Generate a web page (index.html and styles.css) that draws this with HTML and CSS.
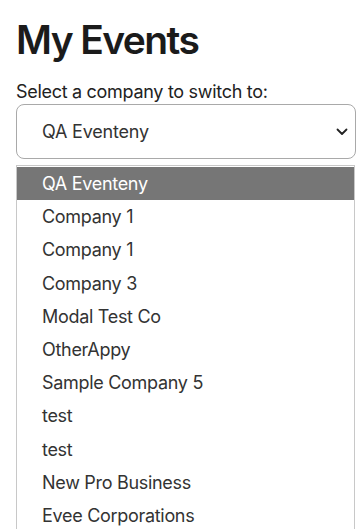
FILE: index.html
```html
<!DOCTYPE html>
<html lang="en">
<head>
  <meta charset="UTF-8">
  <meta name="viewport" content="width=device-width, initial-scale=1.0">
  <title>My Events</title>
  <link rel="stylesheet" href="styles.css">
</head>
<body>

  <!-- Page heading -->
  <h1 class="page-title">My Events</h1>

  <!-- Company switcher -->
  <div class="switcher">
    <label class="switcher-label">Select a company to switch to:</label>
    <div class="select-box">
      <span class="select-value">QA Eventeny</span>
      <svg class="chevron" width="12" height="8" viewBox="0 0 12 8">
        <path d="M1.5 1.5 L6 6 L10.5 1.5" fill="none" stroke="#222" stroke-width="1.8" stroke-linecap="round" stroke-linejoin="round"/>
      </svg>
    </div>

    <!-- Open dropdown list -->
    <ul class="options">
      <li class="option selected">QA Eventeny</li>
      <li class="option">Company 1</li>
      <li class="option">Company 1</li>
      <li class="option">Company 3</li>
      <li class="option">Modal Test Co</li>
      <li class="option">OtherAppy</li>
      <li class="option">Sample Company 5</li>
      <li class="option">test</li>
      <li class="option">test</li>
      <li class="option">New Pro Business</li>
      <li class="option">Evee Corporations</li>
    </ul>
  </div>

</body>
</html>
```

FILE: styles.css
```css
/* Reset */
* {
  margin: 0;
  padding: 0;
  box-sizing: border-box;
}

body {
  font-family: Inter, "Noto Sans", sans-serif;
  background-color: #fff;
  color: #333;
  padding: 0 4px 0 16px;
  overflow: hidden;
}

/* Heading */
.page-title {
  font-size: 39px;
  font-weight: 600;
  letter-spacing: -1.6px;
  color: #1b1b1b;
  line-height: 48px;
  padding-top: 16px;
}

/* Switcher */
.switcher {
  margin-top: 17px;
}

.switcher-label {
  display: block;
  font-size: 18px;
  letter-spacing: -0.3px;
  color: #222;
  line-height: 22px;
}

.select-box {
  display: flex;
  align-items: center;
  justify-content: space-between;
  height: 55px;
  margin-top: 1px;
  border: 1px solid #a9a9a9;
  border-radius: 8px;
  padding: 0 7px 0 25px;
}

.select-value {
  font-size: 18px;
  letter-spacing: -0.2px;
  color: #333;
}

/* Dropdown list */
.options {
  list-style: none;
  margin-top: 6px;
  border: 1px solid #c8c8c8;
  border-bottom: none;
  margin-right: 1px;
  padding-top: 1px;
}

.option {
  height: 33.2px;
  line-height: 34px;
  padding-left: 25px;
  font-size: 18px;
  letter-spacing: -0.3px;
  color: #333;
}

.option.selected {
  background-color: #767676;
  color: #fff;
}
```
